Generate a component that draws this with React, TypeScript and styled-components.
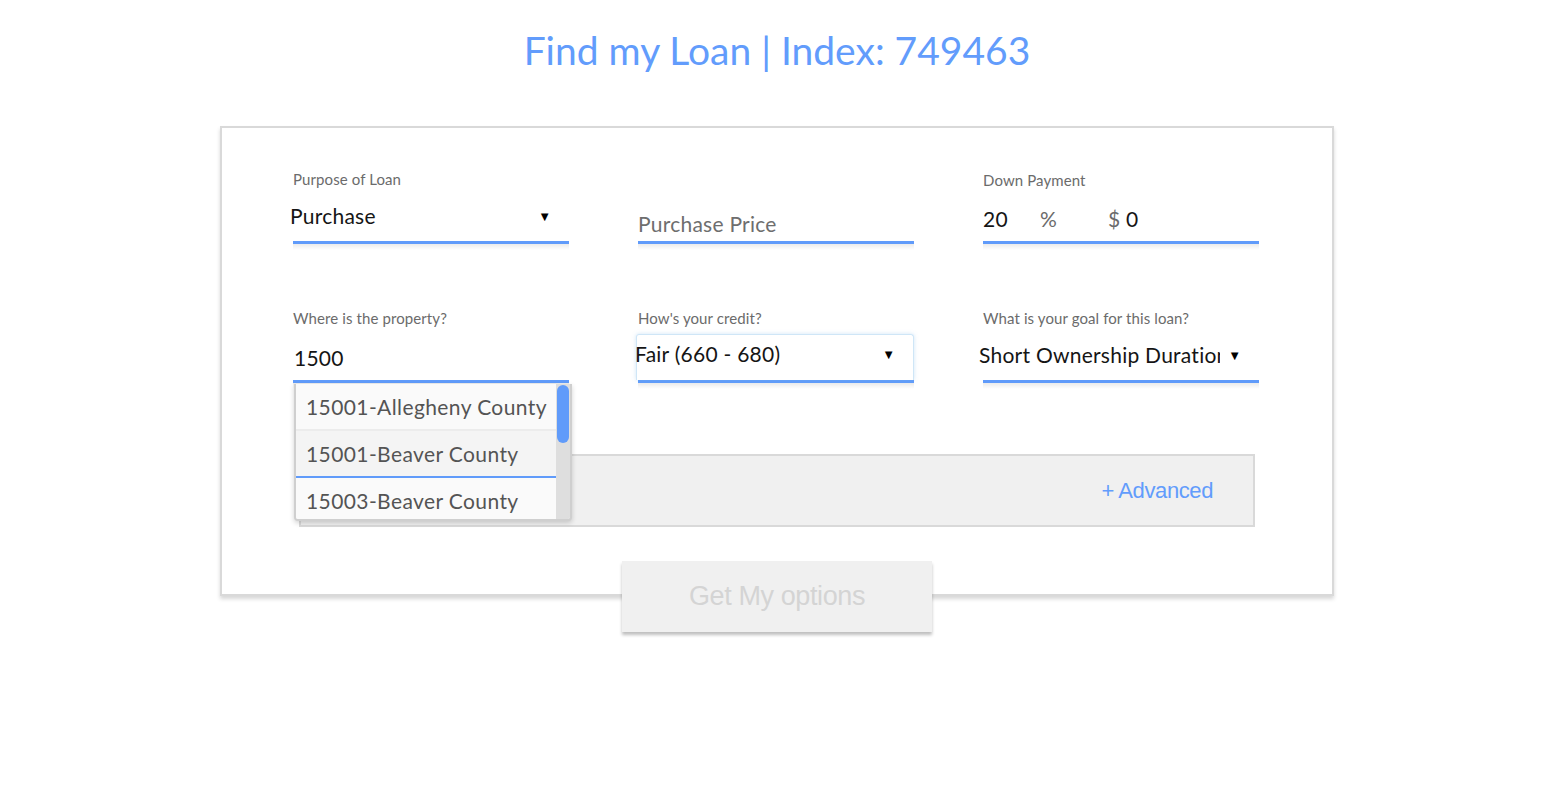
import React from "react";
import styled, { createGlobalStyle, css } from "styled-components";

const Global = createGlobalStyle`
  html, body { margin: 0; padding: 0; background: #fff; }
  body { font-family: Lato, "Noto Sans", sans-serif; }
  * { box-sizing: border-box; }
`;

const Page = styled.div`
  width: 1554px;
  padding-bottom: 40px;
  display: flex;
  flex-direction: column;
  align-items: center;
`;

const Title = styled.h1`
  margin: 24px 0 0;
  height: 52px;
  line-height: 52px;
  font-family: Lato, sans-serif;
  font-weight: 400;
  font-size: 39px;
  color: #629cfc;
`;

const Card = styled.div`
  margin-top: 50px;
  width: 1114px;
  border: 2px solid #d9d9d9;
  box-shadow: 0 3px 4px rgba(0, 0, 0, 0.16);
  padding: 41px 0 67px;
  display: flex;
  flex-direction: column;
`;

const Grid = styled.div`
  margin: 0 73px 0 71px;
  display: grid;
  grid-template-columns: repeat(3, 276px);
  column-gap: 69px;
  row-gap: 64px;
`;

const Field = styled.div`
  position: relative;
  display: flex;
  flex-direction: column;
`;

const Label = styled.div<{ $dy?: number }>`
  height: 20px;
  line-height: 20px;
  font-size: 15px;
  letter-spacing: 0.1px;
  color: #6b6b6b;
  margin-top: ${(p) => p.$dy ?? 0}px;
`;

const underline = css`
  position: relative;
  border-bottom: 3px solid #609bfa;
  &::after {
    content: "";
    position: absolute;
    left: 0;
    right: 0;
    bottom: -9px;
    height: 6px;
    background: linear-gradient(rgba(0, 0, 0, 0.08), rgba(0, 0, 0, 0));
  }
`;

const Control = styled.div<{ $pt: number; $h: number }>`
  ${underline};
  height: ${(p) => p.$h}px;
  padding-top: ${(p) => p.$pt}px;
  display: flex;
  align-items: flex-start;
`;

const textBase = css`
  line-height: 24px;
  font-size: 21px;
  letter-spacing: 0.25px;
`;

const Value = styled.span<{ $dx?: number }>`
  ${textBase};
  flex: 1;
  min-width: 0;
  color: #151515;
  white-space: nowrap;
  overflow: hidden;
  margin-left: ${(p) => p.$dx ?? 0}px;
`;

const Placeholder = styled.span`
  ${textBase};
  color: #6e6e6e;
`;

const Arrow = styled.span<{ $mr: number }>`
  font-size: 13px;
  line-height: 24px;
  color: #000;
  margin-right: ${(p) => p.$mr}px;
  margin-left: 8px;
`;

const Muted = styled.span<{ $w?: number }>`
  ${textBase};
  color: #6b6b6b;
  width: ${(p) => (p.$w ? `${p.$w}px` : "auto")};
`;

const Dark = styled.span<{ $w?: number }>`
  ${textBase};
  color: #151515;
  width: ${(p) => (p.$w ? `${p.$w}px` : "auto")};
`;

const CreditControl = styled.div`
  ${underline};
  height: 55px;
`;

const FocusBox = styled.div`
  margin-top: 6px;
  height: 46px;
  margin-left: -2px;
  padding-top: 7px;
  border: 1px solid #cfe6f7;
  border-bottom: none;
  border-radius: 3px 3px 0 0;
  box-shadow: 0 0 4px rgba(120, 180, 230, 0.35);
  display: flex;
  align-items: flex-start;
`;

const Dropdown = styled.div`
  position: absolute;
  left: 1px;
  top: 76px;
  width: 278px;
  height: 137px;
  border: 2px solid #cfcfcf;
  border-top: none;
  border-radius: 0 0 4px 4px;
  box-shadow: 0 2px 5px rgba(0, 0, 0, 0.18);
  background: #fafafa;
  overflow: hidden;
  display: flex;
  z-index: 2;
`;

const List = styled.div`
  flex: 1;
  display: flex;
  flex-direction: column;
`;

const Item = styled.div<{ $bg: string; $line: string }>`
  height: 47px;
  flex: none;
  padding: 0 0 0 10px;
  line-height: 46px;
  font-size: 21px;
  letter-spacing: 0.4px;
  color: #545454;
  background: ${(p) => p.$bg};
  border-bottom: 2px solid ${(p) => p.$line};
  white-space: nowrap;
  overflow: hidden;
`;

const Track = styled.div`
  width: 14px;
  flex: none;
  background: #dedede;
  position: relative;
`;

const Thumb = styled.div`
  position: absolute;
  top: 1px;
  left: 1px;
  width: 12px;
  height: 58px;
  border-radius: 6px;
  background: #609bfa;
`;

const Advanced = styled.div`
  margin: 71px 77px 0;
  height: 73px;
  background: #f0f0f0;
  border: 2px solid #d9d9d9;
  display: flex;
  align-items: center;
  justify-content: flex-end;
  padding-right: 40px;
`;

const AdvancedLink = styled.span`
  font-family: "Liberation Sans", Arial, sans-serif;
  font-size: 22px;
  letter-spacing: -0.4px;
  color: #629cfc;
`;

const Button = styled.div`
  position: relative;
  z-index: 1;
  margin-top: -35px;
  width: 310px;
  height: 71px;
  background: #f0f0f0;
  box-shadow: 0 3px 3px rgba(0, 0, 0, 0.25);
  display: flex;
  align-items: center;
  justify-content: center;
  font-family: "Liberation Sans", Arial, sans-serif;
  font-size: 27px;
  letter-spacing: -0.4px;
  color: #d4d4d4;
  cursor: default;
`;

export default function App() {
  return (
    <Page>
      <Global />
      <Title>Find my Loan | Index: 749463</Title>
      <Card>
        <Grid>
          <Field>
            <Label>Purpose of Loan</Label>
            <Control $pt={15} $h={55}>
              <Value $dx={-3}>Purchase</Value>
              <Arrow $mr={18}>▼</Arrow>
            </Control>
          </Field>
          <Field>
            <Label />
            <Control $pt={23} $h={55}>
              <Placeholder>Purchase Price</Placeholder>
            </Control>
          </Field>
          <Field>
            <Label $dy={1}>Down Payment</Label>
            <Control $pt={17} $h={54}>
              <Dark $w={57}>20</Dark>
              <Muted $w={68}>%</Muted>
              <Muted>$&nbsp;</Muted>
              <Dark>0</Dark>
            </Control>
          </Field>

          <Field>
            <Label>Where is the property?</Label>
            <Control $pt={18} $h={55}>
              <Value $dx={1}>1500</Value>
            </Control>
            <Dropdown>
              <List>
                <Item $bg="#fafafa" $line="#ececec">15001-Allegheny County</Item>
                <Item $bg="#f4f4f4" $line="#609bfa">15001-Beaver County</Item>
                <Item $bg="#fafafa" $line="#ececec">15003-Beaver County</Item>
              </List>
              <Track>
                <Thumb />
              </Track>
            </Dropdown>
          </Field>
          <Field>
            <Label>How's your credit?</Label>
            <CreditControl>
              <FocusBox>
                <Value $dx={-2}>Fair (660 - 680)</Value>
                <Arrow $mr={18}>▼</Arrow>
              </FocusBox>
            </CreditControl>
          </Field>
          <Field>
            <Label>What is your goal for this loan?</Label>
            <Control $pt={15} $h={55}>
              <Value $dx={-4}>Short Ownership Duration</Value>
              <Arrow $mr={18}>▼</Arrow>
            </Control>
          </Field>
        </Grid>
        <Advanced>
          <AdvancedLink>+ Advanced</AdvancedLink>
        </Advanced>
      </Card>
      <Button role="button">Get My options</Button>
    </Page>
  );
}
